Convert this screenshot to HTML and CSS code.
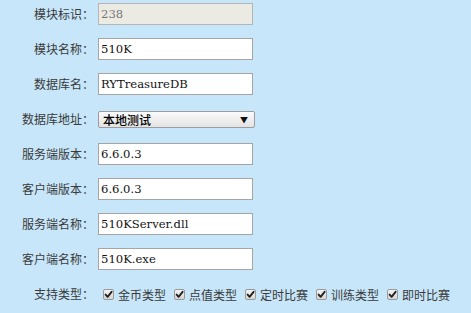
FILE: index.html
```html
<!DOCTYPE html>
<html lang="zh-CN">
<head>
<meta charset="utf-8">
<title>模块</title>
<link rel="stylesheet" href="styles.css">
</head>
<body>
<div class="form">
  <div class="row">
    <label class="lbl">模块标识：</label>
    <input class="txt" type="text" value="238" disabled>
  </div>
  <div class="row">
    <label class="lbl">模块名称：</label>
    <input class="txt" type="text" value="510K">
  </div>
  <div class="row">
    <label class="lbl">数据库名：</label>
    <input class="txt" type="text" value="RYTreasureDB">
  </div>
  <div class="row">
    <label class="lbl">数据库地址：</label>
    <div class="sel"><span class="sel-text">本地测试</span><span class="sel-arrow">▼</span></div>
  </div>
  <div class="row">
    <label class="lbl">服务端版本：</label>
    <input class="txt" type="text" value="6.6.0.3">
  </div>
  <div class="row">
    <label class="lbl">客户端版本：</label>
    <input class="txt" type="text" value="6.6.0.3">
  </div>
  <div class="row">
    <label class="lbl">服务端名称：</label>
    <input class="txt" type="text" value="510KServer.dll">
  </div>
  <div class="row">
    <label class="lbl">客户端名称：</label>
    <input class="txt" type="text" value="510K.exe">
  </div>
  <div class="row">
    <label class="lbl">支持类型：</label>
    <div class="checks">
      <span class="chk"><span class="box"><svg viewBox="0 0 11 11" width="11" height="11"><path d="M2.6 5.6 L4.6 7.8 L8.6 2.8" fill="none" stroke="#222" stroke-width="1.9" stroke-linecap="round" stroke-linejoin="round"/></svg></span>金币类型</span>
      <span class="chk"><span class="box"><svg viewBox="0 0 11 11" width="11" height="11"><path d="M2.6 5.6 L4.6 7.8 L8.6 2.8" fill="none" stroke="#222" stroke-width="1.9" stroke-linecap="round" stroke-linejoin="round"/></svg></span>点值类型</span>
      <span class="chk"><span class="box"><svg viewBox="0 0 11 11" width="11" height="11"><path d="M2.6 5.6 L4.6 7.8 L8.6 2.8" fill="none" stroke="#222" stroke-width="1.9" stroke-linecap="round" stroke-linejoin="round"/></svg></span>定时比赛</span>
      <span class="chk"><span class="box"><svg viewBox="0 0 11 11" width="11" height="11"><path d="M2.6 5.6 L4.6 7.8 L8.6 2.8" fill="none" stroke="#222" stroke-width="1.9" stroke-linecap="round" stroke-linejoin="round"/></svg></span>训练类型</span>
      <span class="chk"><span class="box"><svg viewBox="0 0 11 11" width="11" height="11"><path d="M2.6 5.6 L4.6 7.8 L8.6 2.8" fill="none" stroke="#222" stroke-width="1.9" stroke-linecap="round" stroke-linejoin="round"/></svg></span>即时比赛</span>
    </div>
  </div>
</div>
</body>
</html>
```
FILE: styles.css
```css
html, body {
  margin: 0;
  padding: 0;
  background: #c7e6f9;
}
body {
  font-family: "Noto Sans CJK SC", sans-serif;
  font-size: 12px;
  color: #3a3a3a;
  width: 471px;
  height: 313px;
  overflow: hidden;
}
.form {
  display: flex;
  flex-direction: column;
  gap: 13px;
  padding-top: 3px;
}
.row {
  display: grid;
  grid-template-columns: 94px auto;
  column-gap: 4px;
  align-items: center;
  height: 22px;
}
.lbl {
  text-align: right;
  white-space: nowrap;
  line-height: 22px;
}
.txt {
  box-sizing: border-box;
  width: 155px;
  height: 22px;
  margin: 0;
  padding: 1px 2px;
  border: 1px solid #a5a5a5;
  background: #fff;
  font-family: "DejaVu Serif", serif;
  font-size: 11.6px;
  color: #111;
  outline: none;
}
.txt:disabled {
  background: #ebebe4;
  color: #777;
  border-color: #b5b5b5;
}
.sel {
  box-sizing: border-box;
  width: 157px;
  height: 17px;
  display: flex;
  justify-content: space-between;
  align-items: center;
  padding: 0 6px 0 4px;
  border: 1px solid #9c9c9c;
  border-radius: 2px;
  background: linear-gradient(#fbfbfb, #e3e3e3);
  color: #111;
}
.sel-text {
  font-weight: 500;
  font-size: 12px;
  line-height: 15px;
  color: #000;
}
.sel-arrow {
  font-size: 8px;
  color: #111;
  line-height: 15px;
}
.checks {
  display: flex;
  align-items: center;
  gap: 8px;
  padding-left: 5px;
  padding-top: 1px;
}
.chk {
  display: flex;
  align-items: center;
  gap: 4px;
  white-space: nowrap;
}
.box {
  box-sizing: border-box;
  width: 11px;
  height: 11px;
  border: 1px solid #9a9a9a;
  border-radius: 2px;
  background: linear-gradient(#f4f4f4, #d6d6d6);
  display: flex;
}
.box svg {
  margin: -1px;
}
```
